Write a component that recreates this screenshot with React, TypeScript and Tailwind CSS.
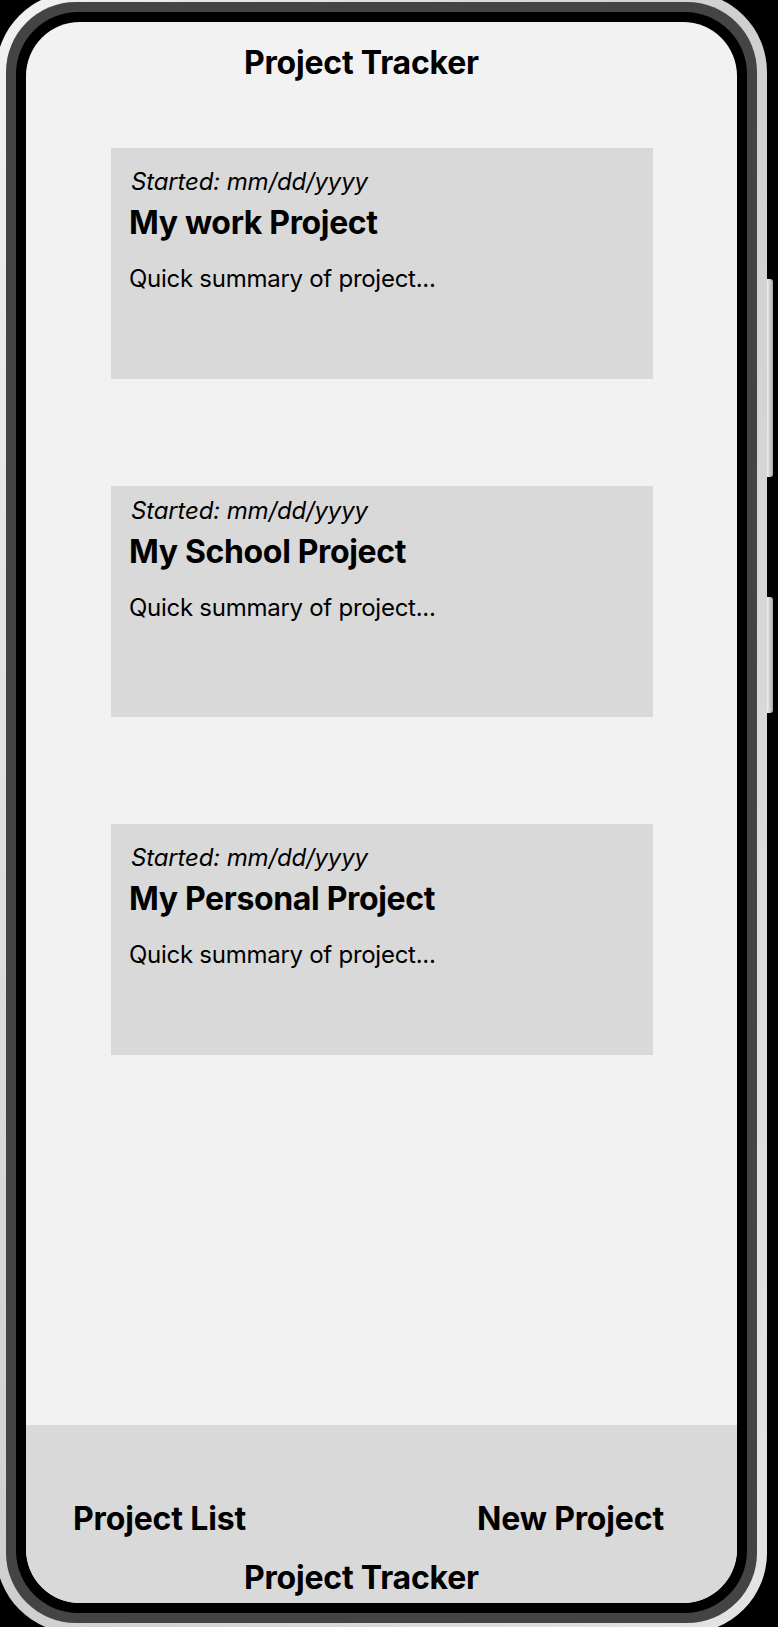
const projects = [
  { title: "My work Project", started: "mm/dd/yyyy", summary: "Quick summary of project...", pt: "pt-[19px]" },
  { title: "My School Project", started: "mm/dd/yyyy", summary: "Quick summary of project...", pt: "pt-[10px]" },
  { title: "My Personal Project", started: "mm/dd/yyyy", summary: "Quick summary of project...", pt: "pt-[19px]" },
];

function ProjectCard({ title, started, summary, pt }: { title: string; started: string; summary: string; pt: string }) {
  return (
    <div className={`w-[542px] h-[231px] bg-[#d9d9d9] pl-[18px] ${pt}`}>
      <p className="text-[24px] leading-[29px] italic pl-[2px] tracking-[-0.15px]">Started: {started}</p>
      <h2 className="mt-[7px] text-[32px] leading-[39px] font-bold tracking-[-0.35px]">{title}</h2>
      <p className="mt-[22px] text-[24px] leading-[29px] tracking-[-0.27px]">{summary}</p>
    </div>
  );
}

export default function App() {
  return (
    <div
      className="w-[778px] h-[1627px] bg-black overflow-hidden flex items-start text-black"
      style={{ fontFamily: "Inter, 'Noto Sans', sans-serif" }}
    >
      {/* phone body */}
      <div className="shrink-0 -ml-[4px] -mt-[8px] w-[771px] h-[1641px] rounded-[80px] p-[10px] bg-gradient-to-br from-[#f2f2f2] via-[#cfcfcf] to-[#e4e4e4]">
        <div className="h-full rounded-[70px] p-[10px] bg-[#444444]">
          <div className="h-full rounded-[62px] p-[10px] bg-black">
            <div className="h-full rounded-[54px] bg-[#f2f2f2] overflow-hidden flex flex-col">
              <header className="pt-[21px] pl-[218px]">
                <h1 className="text-[32px] leading-[39px] font-bold tracking-[-0.2px]">Project Tracker</h1>
              </header>

              <main className="mt-[66px] pl-[85px] flex flex-col gap-[107px]">
                {projects.map((p, i) => (
                  <ProjectCard key={i} {...p} />
                ))}
              </main>

              <div className="flex-1" />

              <nav className="h-[178px] bg-[#d9d9d9] pt-[74px] text-[32px] leading-[39px] font-bold tracking-[-0.15px]">
                <div className="flex justify-between pl-[47px] pr-[73px]">
                  <span>Project List</span>
                  <span>New Project</span>
                </div>
                <p className="mt-[20px] pl-[218px] tracking-[-0.2px]">Project Tracker</p>
              </nav>
            </div>
          </div>
        </div>
      </div>

      {/* side buttons */}
      <div className="shrink-0 mt-[279px] flex flex-col gap-[120px]">
        <div className="w-[6px] h-[198px] rounded-r-[3px] bg-gradient-to-r from-[#f0f0f0] to-[#a8a8a8]" />
        <div className="w-[6px] h-[116px] rounded-r-[3px] bg-gradient-to-r from-[#f0f0f0] to-[#a8a8a8]" />
      </div>
    </div>
  );
}
